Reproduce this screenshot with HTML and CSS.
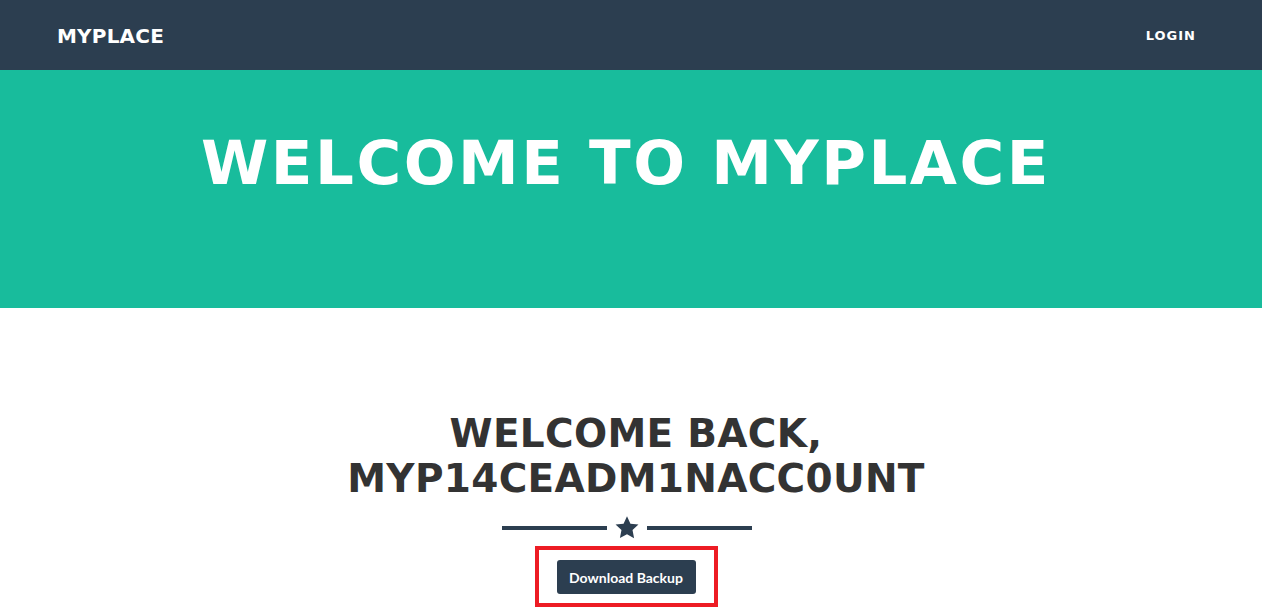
FILE: index.html
```html
<!DOCTYPE html>
<html>
<head>
<meta charset="utf-8">
<link rel="stylesheet" href="styles.css">
</head>
<body>
<nav class="navbar">
  <a class="brand" href="#">MYPLACE</a>
  <a class="nav-link" href="#">LOGIN</a>
</nav>
<header class="hero">
  <h1 class="hero-title">WELCOME TO MYPLACE</h1>
</header>
<section class="welcome">
  <h2 class="welcome-title">WELCOME BACK,<br>MYP14CEADM1NACC0UNT</h2>
  <div class="divider">
    <span class="divider-line"></span>
    <svg class="divider-star" width="26" height="25" viewBox="0 0 24 24"><path d="M12 1.2l3.3 7.1 7.7.9-5.7 5.3 1.5 7.7L12 18.4l-6.8 3.8 1.5-7.7L1 9.2l7.7-.9z" fill="#2c3e50"/></svg>
    <span class="divider-line"></span>
  </div>
  <div class="highlight">
    <button class="btn">Download Backup</button>
  </div>
</section>
</body>
</html>
```
FILE: styles.css
```css
html, body {
  margin: 0;
  padding: 0;
  background: #fff;
}
body {
  font-family: "DejaVu Sans", "Liberation Sans", sans-serif;
}
.navbar {
  height: 70px;
  background: #2c3e50;
  display: flex;
  align-items: center;
  justify-content: space-between;
  padding: 0 66px 0 57px;
}
.brand {
  color: #fff;
  text-decoration: none;
  font-weight: bold;
  font-size: 20px;
  letter-spacing: 0.2px;
  margin-top: 1px;
}
.nav-link {
  color: #fff;
  text-decoration: none;
  font-weight: bold;
  font-size: 13px;
  letter-spacing: 1px;
}
.hero {
  background: #18bc9c;
  height: 238px;
  display: flex;
  justify-content: center;
  padding-top: 62px;
  box-sizing: border-box;
}
.hero-title {
  margin: 0;
  color: #fff;
  font-size: 61px;
  line-height: 1;
  font-weight: bold;
  letter-spacing: 2.5px;
  padding-right: 10px;
}
.welcome {
  display: flex;
  flex-direction: column;
  align-items: center;
  padding-top: 103px;
}
.welcome-title {
  margin: 0;
  text-align: center;
  color: #333;
  font-size: 39px;
  line-height: 45px;
  font-weight: bold;
  letter-spacing: 0.3px;
  padding-left: 10px;
}
.divider {
  display: flex;
  align-items: center;
  gap: 7px;
  margin-top: 14px;
  margin-left: -8px;
}
.divider-line {
  width: 105px;
  height: 4px;
  background: #2c3e50;
}
.divider-star {
  display: block;
}
.highlight {
  margin-top: 6px;
  border: 4px solid #ed1c24;
  padding: 10px 18px 9px 18px;
  margin-left: -10px;
}
.btn {
  background: #2c3e50;
  color: #fff;
  border: none;
  border-radius: 3px;
  font-family: Lato, "Liberation Sans", sans-serif;
  font-weight: bold;
  font-size: 14px;
  height: 34px;
  width: 139px;
  padding: 0;
  display: block;
}
```
